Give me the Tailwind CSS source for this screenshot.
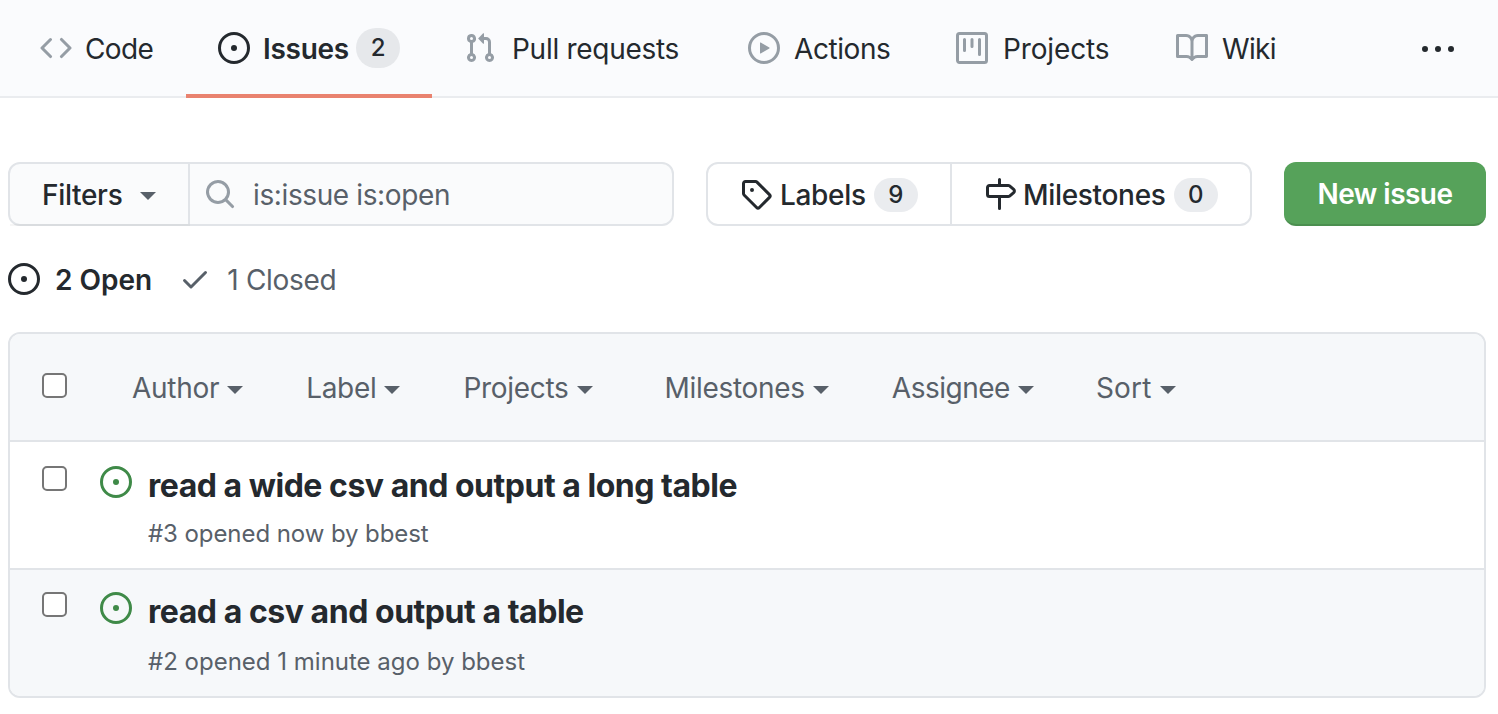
<!DOCTYPE html>
<html lang="en">
<head>
  <meta charset="UTF-8" />
  <title>Issues</title>
  <script src="https://cdn.jsdelivr.net/npm/@tailwindcss/browser@4"></script>
</head>
<body class="bg-white font-['Inter',sans-serif] text-[#24292e] overflow-hidden">
  <!-- repo tabs -->
  <nav class="relative h-[98px] bg-[#fafbfd] border-b-2 border-[#eaecef] pl-2 flex text-[28px] tracking-[-0.28px]">
    <a class="flex items-center gap-[13px] px-8 h-24 w-[178px]">
      <svg class="w-8 h-8 shrink-0 fill-[#959da5]" viewBox="0 0 16 16"><path d="M4.72 3.22a.75.75 0 011.06 1.06L2.06 8l3.72 3.72a.75.75 0 11-1.06 1.06L.47 8.53a.75.75 0 010-1.06l4.25-4.25zm6.56 0a.75.75 0 10-1.06 1.06L13.94 8l-3.72 3.72a.75.75 0 101.06 1.06l4.25-4.25a.75.75 0 000-1.06l-4.25-4.25z"/></svg>
      <span class="mt-px tracking-[-0.6px]">Code</span>
    </a>
    <a class="relative flex items-center px-8 h-24 w-[246px]">
      <svg class="w-8 h-8 shrink-0 fill-[#24292e]" viewBox="0 0 16 16"><path d="M8 9.5a1.5 1.5 0 100-3 1.5 1.5 0 000 3z"/><path fill-rule="evenodd" d="M8 0a8 8 0 100 16A8 8 0 008 0zM1.5 8a6.5 6.5 0 1113 0 6.5 6.5 0 01-13 0z"/></svg>
      <span class="ml-[13px] mt-px font-semibold">Issues</span>
      <span class="ml-auto w-11 h-10 rounded-full bg-[#e6e8eb] flex items-center justify-center text-2xl font-medium">2</span>
      <span class="absolute left-0 right-0 top-[94px] h-1 bg-[#e9826f]"></span>
    </a>
    <a class="flex items-center gap-4 pl-8 h-24 w-[284px]">
      <svg class="w-8 h-8 shrink-0 fill-[#959da5]" viewBox="0 0 16 16"><path d="M7.177 3.073L9.573.677A.25.25 0 0110 .854v4.792a.25.25 0 01-.427.177L7.177 3.427a.25.25 0 010-.354zM3.75 2.5a.75.75 0 100 1.5.75.75 0 000-1.5zm-2.25.75a2.25 2.25 0 113 2.122v5.256a2.251 2.251 0 11-1.5 0V5.372A2.25 2.25 0 011.5 3.25zM11 2.5h-1V4h1a1 1 0 011 1v5.628a2.251 2.251 0 101.5 0V5A2.5 2.5 0 0011 2.5zm1 10.25a.75.75 0 111.5 0 .75.75 0 01-1.5 0zM3.75 12a.75.75 0 100 1.5.75.75 0 000-1.5z"/></svg>
      <span class="mt-px">Pull requests</span>
    </a>
    <a class="flex items-center gap-[14px] pl-8 h-24 w-[208px]">
      <svg class="w-8 h-8 shrink-0 fill-[#959da5]" viewBox="0 0 16 16"><path fill-rule="evenodd" d="M1.5 8a6.5 6.5 0 1113 0 6.5 6.5 0 01-13 0zM8 0a8 8 0 100 16A8 8 0 008 0zM6.379 5.227A.25.25 0 006 5.442v5.117a.25.25 0 00.379.214l4.264-2.559a.25.25 0 000-.428L6.379 5.227z"/></svg>
      <span class="mt-px tracking-[-0.42px]">Actions</span>
    </a>
    <a class="flex items-center gap-[15px] pl-8 h-24 w-[220px]">
      <svg class="w-8 h-8 shrink-0 fill-[#959da5]" viewBox="0 0 16 16"><path fill-rule="evenodd" d="M1.75 0A1.75 1.75 0 000 1.75v12.5C0 15.216.784 16 1.75 16h12.5A1.75 1.75 0 0016 14.25V1.75A1.75 1.75 0 0014.25 0H1.75zM1.5 1.75a.25.25 0 01.25-.25h12.5a.25.25 0 01.25.25v12.5a.25.25 0 01-.25.25H1.75a.25.25 0 01-.25-.25V1.75zM11.75 3a.75.75 0 00-.75.75v7.5a.75.75 0 001.5 0v-7.5a.75.75 0 00-.75-.75zm-8.25.75a.75.75 0 011.5 0v5.5a.75.75 0 01-1.5 0v-5.5zM8 3a.75.75 0 00-.75.75v3.5a.75.75 0 001.5 0v-3.5A.75.75 0 008 3z"/></svg>
      <span class="mt-px tracking-[-0.14px]">Projects</span>
    </a>
    <a class="flex items-center gap-[14px] pl-8 h-24">
      <svg class="w-8 h-8 shrink-0 fill-[#959da5]" viewBox="0 0 16 16"><path fill-rule="evenodd" d="M0 1.75A.75.75 0 01.75 1h4.253c1.227 0 2.317.59 3 1.501A3.744 3.744 0 0111.006 1h4.245a.75.75 0 01.75.75v10.5a.75.75 0 01-.75.75h-4.507a2.25 2.25 0 00-1.591.659l-.622.621a.75.75 0 01-1.06 0l-.622-.621A2.25 2.25 0 005.258 13H.75a.75.75 0 01-.75-.75V1.75zm8.755 3a2.25 2.25 0 012.25-2.25H14.5v9h-3.757c-.71 0-1.4.201-1.992.572l.004-7.322zm-1.504 7.324l.004-5.073-.002-2.253A2.25 2.25 0 005.003 2.5H1.5v9h3.757a3.75 3.75 0 011.994.574z"/></svg>
      <span class="mt-px tracking-[-0.7px]">Wiki</span>
    </a>
    <div class="ml-auto mr-[44px] mt-0.5 h-24 flex items-center">
      <svg class="w-8 h-8 fill-[#24292e]" viewBox="0 0 16 16"><path d="M8 9a1.5 1.5 0 100-3 1.5 1.5 0 000 3zM1.5 9a1.5 1.5 0 100-3 1.5 1.5 0 000 3zm13 0a1.5 1.5 0 100-3 1.5 1.5 0 000 3z"/></svg>
    </div>
  </nav>

  <main class="pl-2 pr-3 pt-16">
    <!-- toolbar -->
    <div class="flex h-16 text-[28px] tracking-[-0.32px]">
      <div class="flex w-[666px] rounded-xl border-2 border-[#e1e4e8] bg-[#fafbfc]">
        <button class="w-[180px] shrink-0 border-r-2 border-[#e1e4e8] font-medium flex items-center pl-8 shadow-[0_2px_0_rgba(27,31,35,0.04)]">
          <span class="mt-px">Filters</span>
          <span class="ml-[18px] mt-[3px] border-x-[8px] border-t-[8px] border-x-transparent border-t-[#586069]"></span>
        </button>
        <div class="flex items-center pl-[14px] text-[#586069]">
          <svg class="w-8 h-8 fill-[#959da5]" viewBox="0 0 16 16"><path fill-rule="evenodd" d="M11.5 7a4.499 4.499 0 11-8.998 0A4.499 4.499 0 0111.5 7zm-.82 4.74a6 6 0 111.06-1.06l3.04 3.04a.75.75 0 11-1.06 1.06l-3.04-3.04z"/></svg>
          <span class="ml-[17px] mt-px tracking-[-0.38px]">is:issue is:open</span>
        </div>
      </div>
      <div class="ml-8 flex w-[546px] rounded-xl border-2 border-[#e1e4e8] font-medium">
        <a class="w-[244px] shrink-0 border-r-2 border-[#e1e4e8] flex items-center pl-8">
          <svg class="w-8 h-8 shrink-0 fill-[#24292e]" viewBox="0 0 16 16"><path fill-rule="evenodd" d="M2.5 7.775V2.75a.25.25 0 01.25-.25h5.025a.25.25 0 01.177.073l6.25 6.25a.25.25 0 010 .354l-5.025 5.025a.25.25 0 01-.354 0l-6.25-6.25a.25.25 0 01-.073-.177zm-1.5 0V2.75C1 1.784 1.784 1 2.75 1h5.025c.464 0 .91.184 1.238.513l6.25 6.25a1.75 1.75 0 010 2.474l-5.026 5.026a1.75 1.75 0 01-2.474 0l-6.25-6.25A1.75 1.75 0 011 7.775zM6 5a1 1 0 100 2 1 1 0 000-2z"/></svg>
          <span class="ml-2 mt-px">Labels</span>
          <span class="ml-2 mt-px w-11 h-[34px] rounded-full bg-[#eaecef] flex items-center justify-center text-2xl">9</span>
        </a>
        <a class="flex items-center pl-8">
          <svg class="w-8 h-8 shrink-0 fill-[#24292e]" viewBox="0 0 16 16"><path fill-rule="evenodd" d="M7.75 0a.75.75 0 01.75.75V3h3.634c.414 0 .814.147 1.13.414l2.07 1.75a1.75 1.75 0 010 2.672l-2.07 1.75a1.75 1.75 0 01-1.13.414H8.5v5.25a.75.75 0 11-1.5 0V10H2.75A1.75 1.75 0 011 8.25v-3.5C1 3.784 1.784 3 2.75 3H7V.75A.75.75 0 017.75 0zm0 8.5h4.384a.25.25 0 00.161-.06l2.07-1.75a.25.25 0 000-.38l-2.07-1.75a.25.25 0 00-.161-.06H2.75a.25.25 0 00-.25.25v3.5c0 .138.112.25.25.25h5z"/></svg>
          <span class="ml-[7px] mt-px">Milestones</span>
          <span class="ml-2 mt-px w-11 h-[34px] rounded-full bg-[#eaecef] flex items-center justify-center text-2xl">0</span>
        </a>
      </div>
      <button class="ml-8 w-[202px] pt-px rounded-xl bg-[#56a25a] border-b-2 border-[#4b8f4f] text-white font-semibold tracking-[-0.52px]">New issue</button>
    </div>

    <!-- open / closed -->
    <div class="h-[106px] flex items-center text-[28px]">
      <svg class="w-8 h-8 fill-[#24292e]" viewBox="0 0 16 16"><path d="M8 9.5a1.5 1.5 0 100-3 1.5 1.5 0 000 3z"/><path fill-rule="evenodd" d="M8 0a8 8 0 100 16A8 8 0 008 0zM1.5 8a6.5 6.5 0 1113 0 6.5 6.5 0 01-13 0z"/></svg>
      <span class="ml-[15px] mt-0.5 font-semibold">2 Open</span>
      <svg class="ml-[27px] w-8 h-8 fill-[#586069]" viewBox="0 0 16 16"><path d="M13.78 4.22a.75.75 0 010 1.06l-7.25 7.25a.75.75 0 01-1.06 0L2.22 9.28a.75.75 0 011.06-1.06L6 10.94l6.72-6.72a.75.75 0 011.06 0z"/></svg>
      <span class="ml-4 mt-0.5 tracking-[-0.28px] text-[#586069]">1 Closed</span>
    </div>

    <!-- issue list -->
    <div class="h-[366px] rounded-xl border-2 border-[#e1e4e8] overflow-hidden">
      <div class="h-[108px] bg-[#f6f8fa] border-b-2 border-[#e1e4e8] flex items-center pl-8 text-[28px] tracking-[-0.3px] text-[#586069]">
        <span class="mb-1 w-[25px] h-[25px] rounded-[5px] border-2 border-[#767676] bg-white"></span>
        <div class="ml-[65px] mt-0.5 flex items-center">
          <span>Author</span><span class="ml-2 mt-[3px] border-x-[8px] border-t-[8px] border-x-transparent border-t-[#586069]"></span>
          <span class="ml-[63px]">Label</span><span class="ml-2 mt-[3px] border-x-[8px] border-t-[8px] border-x-transparent border-t-[#586069]"></span>
          <span class="ml-[63px]">Projects</span><span class="ml-2 mt-[3px] border-x-[8px] border-t-[8px] border-x-transparent border-t-[#586069]"></span>
          <span class="ml-[72px]">Milestones</span><span class="ml-2 mt-[3px] border-x-[8px] border-t-[8px] border-x-transparent border-t-[#586069]"></span>
          <span class="ml-[63px] tracking-[-0.5px]">Assignee</span><span class="ml-2 mt-[3px] border-x-[8px] border-t-[8px] border-x-transparent border-t-[#586069]"></span>
          <span class="ml-[62px] tracking-[0.2px]">Sort</span><span class="ml-2 mt-[3px] border-x-[8px] border-t-[8px] border-x-transparent border-t-[#586069]"></span>
        </div>
      </div>

      <div class="h-[128px] border-b-2 border-[#e1e4e8] flex pl-8 pt-6">
        <span class="w-[25px] h-[25px] rounded-[5px] border-2 border-[#767676] bg-white"></span>
        <svg class="ml-[33px] w-8 h-8 fill-[#3f8a48]" viewBox="0 0 16 16"><path d="M8 9.5a1.5 1.5 0 100-3 1.5 1.5 0 000 3z"/><path fill-rule="evenodd" d="M8 0a8 8 0 100 16A8 8 0 008 0zM1.5 8a6.5 6.5 0 1113 0 6.5 6.5 0 01-13 0z"/></svg>
        <div class="ml-4">
          <div class="text-[32px] leading-10 font-[650] tracking-[-0.48px]">read a wide csv and output a long table</div>
          <div class="mt-3 text-2xl leading-8 tracking-[-0.08px] text-[#586069]">#3 opened now by bbest</div>
        </div>
      </div>

      <div class="h-[126px] bg-[#f6f8fa] flex pl-8 pt-[22px]">
        <span class="w-[25px] h-[25px] rounded-[5px] border-2 border-[#767676] bg-white"></span>
        <svg class="ml-[33px] w-8 h-8 fill-[#3f8a48]" viewBox="0 0 16 16"><path d="M8 9.5a1.5 1.5 0 100-3 1.5 1.5 0 000 3z"/><path fill-rule="evenodd" d="M8 0a8 8 0 100 16A8 8 0 008 0zM1.5 8a6.5 6.5 0 1113 0 6.5 6.5 0 01-13 0z"/></svg>
        <div class="ml-4">
          <div class="text-[32px] leading-10 font-[650] tracking-[-0.46px]">read a csv and output a table</div>
          <div class="mt-[14px] text-2xl leading-8 text-[#586069]">#2 opened 1 minute ago by bbest</div>
        </div>
      </div>
    </div>
  </main>
</body>
</html>
